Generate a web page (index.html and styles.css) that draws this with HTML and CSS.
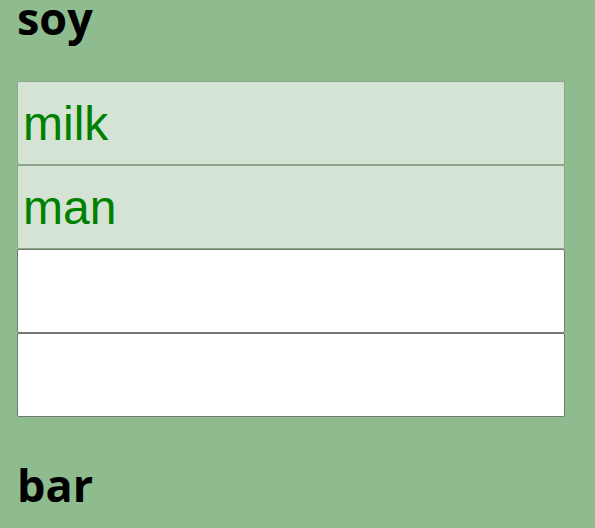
FILE: index.html
```html
<!DOCTYPE html>
<html>
<head>
<meta charset="utf-8">
<link rel="stylesheet" href="styles.css">
</head>
<body>
<div class="page">
  <h1 class="title">soy</h1>
  <div class="fields">
    <input class="field filled" type="text" value="milk">
    <input class="field filled" type="text" value="man">
    <input class="field" type="text" value="">
    <input class="field" type="text" value="">
  </div>
  <h1 class="title bottom">bar</h1>
</div>
</body>
</html>
```
FILE: styles.css
```css
html, body {
  margin: 0;
  padding: 0;
  background: #8fbc8f;
}
.page {
  padding: 0 0 0 17px;
}
.title {
  margin: 0;
  font-family: "Open Sans", "Noto Sans", sans-serif;
  font-weight: 700;
  font-size: 45px;
  line-height: 36px;
  color: #000;
}
.title.bottom {
  margin-top: 50px;
}
.fields {
  margin-top: 45px;
  display: flex;
  flex-direction: column;
}
.field {
  display: block;
  box-sizing: border-box;
  width: 548px;
  height: 84px;
  margin: 0;
  padding: 1px 5px;
  font-family: "Liberation Sans", Arial, sans-serif;
  font-size: 48px;
  color: #008000;
  background: #fff;
  border: 1px solid #767676;
  border-radius: 2px;
  outline: none;
}
.field.filled {
  background: #d4e3d4;
  border-color: #88a888;
}
```
